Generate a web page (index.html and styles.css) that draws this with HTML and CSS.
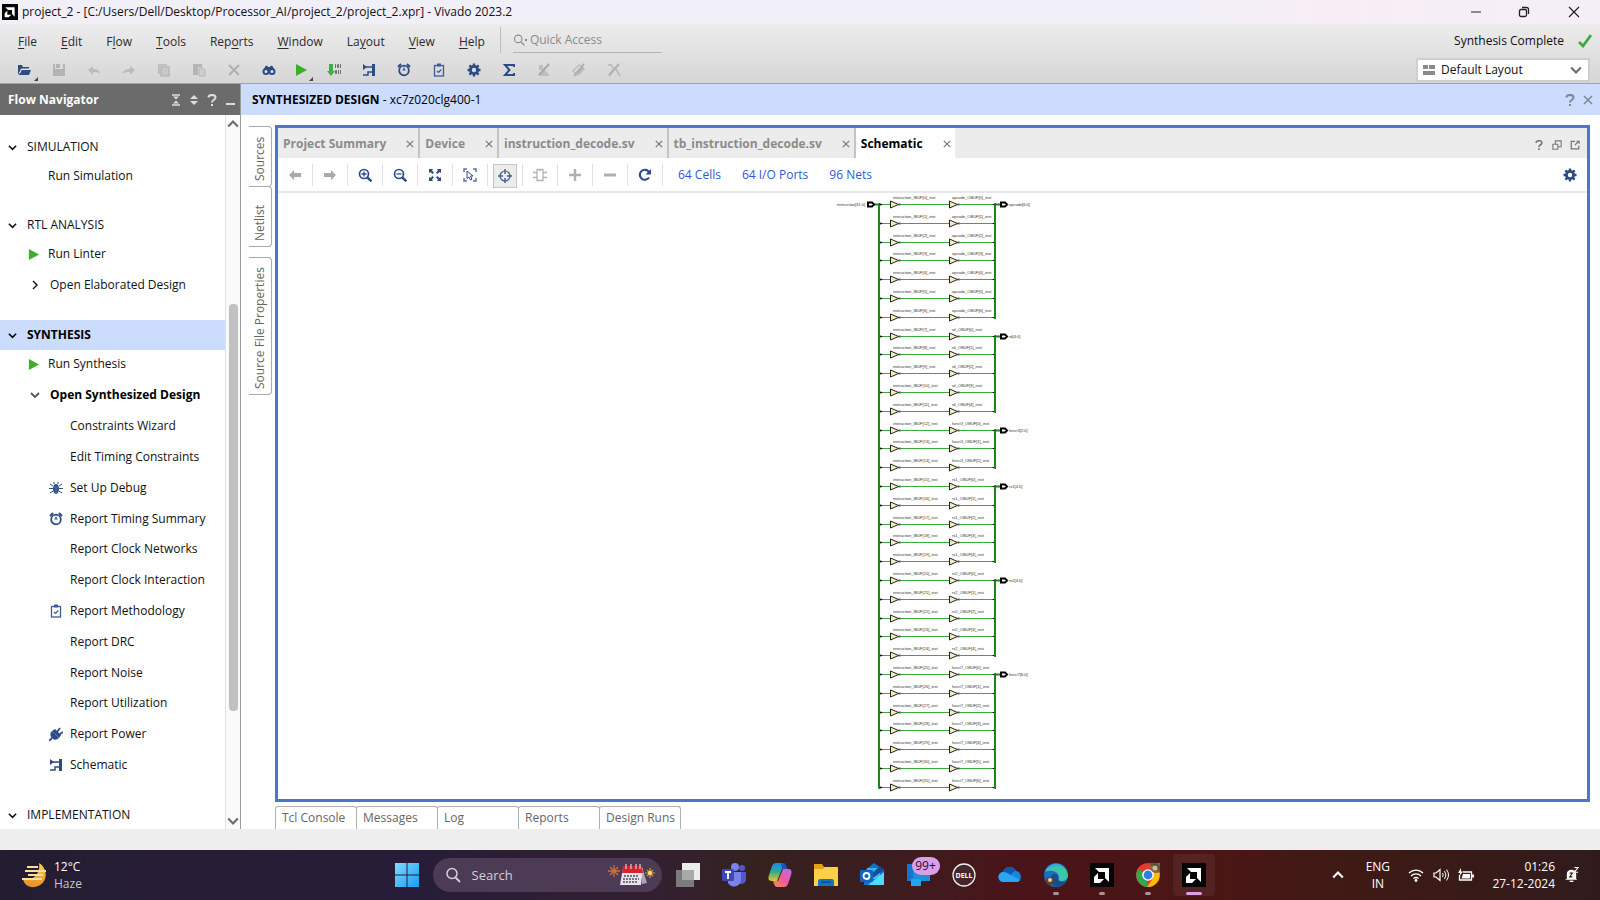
FILE: index.html
```html
<!DOCTYPE html>
<html lang="en">
<head>
<meta charset="utf-8">
<title>project_2 - Vivado 2023.2</title>
<link rel="stylesheet" href="styles.css">
</head>
<body>
<svg class="sprite" aria-hidden="true">
  <symbol id="i-amd" viewBox="0 0 24 24"><rect width="24" height="24" fill="#050505"/><path d="M5 5h14v14l-4-4V9H9z" fill="#fff"/><path d="M8 10v6h6l-4 4H4v-6z" fill="#fff"/></symbol>
  <symbol id="i-open" viewBox="0 0 14 14"><path d="M1 12V2h4l1 2h6v2H4z" fill="#2d4c86"/><path d="M4 7h10l-2 5H2z" fill="#2d4c86"/><path d="M3 10l1.500-4H12" fill="none" stroke="#e4e4e4"/></symbol>
  <symbol id="i-save" viewBox="0 0 14 14"><path d="M1 1h2v5h8V1h2v12H1z" fill="#b4b4b4"/><path d="M4 1h4v4H4z" fill="#b4b4b4"/></symbol>
  <symbol id="i-undo" viewBox="0 0 14 14"><path d="M1 7l5-4v3c4 0 7 1 7 5-2-2-4-2-7-2v3z" fill="#bcbcbc"/></symbol>
  <symbol id="i-redo" viewBox="0 0 14 14"><path d="M13 7L8 3v3c-4 0-7 1-7 5 2-2 4-2 7-2v3z" fill="#bcbcbc"/></symbol>
  <symbol id="i-copy" viewBox="0 0 14 14"><path d="M1 1h9v2H3v8H1z" fill="#c0c0c0"/><rect x="4" y="4" width="8" height="9" fill="#c8c8c8" stroke="#b8b8b8" stroke-width="1.500"/></symbol>
  <symbol id="i-paste" viewBox="0 0 14 14"><path d="M1 1h9v3H6v8H1z" fill="#b4b4b4"/><path d="M7 5h4l2 2v6H7z" fill="#cecece" stroke="#b4b4b4"/></symbol>
  <symbol id="i-del" viewBox="0 0 14 14"><path d="M2 2l10 10M12 2L2 12" stroke="#b0b0b0" stroke-width="2"/></symbol>
  <symbol id="i-find" viewBox="0 0 14 14"><path d="M3 4c1-2 3-1 3 0h2c0-1 2-2 3 0l2 4H1z" fill="#2d4c86"/><circle cx="4" cy="8.500" r="2.500" fill="#dde3ee" stroke="#2d4c86" stroke-width="2"/><circle cx="10" cy="8.500" r="2.500" fill="#dde3ee" stroke="#2d4c86" stroke-width="2"/></symbol>
  <symbol id="i-play" viewBox="0 0 14 14"><path d="M2 1l11 6-11 6z" fill="#3fae29"/></symbol>
  <symbol id="i-bits" viewBox="0 0 14 14"><path d="M2 1h4v7h2l-4 5-4-5h2z" fill="#43ad45"/><path d="M8.500 1v4M10.500 1.500h1v3h-1zM13.500 1v4M8.500 7.500h1v3h-1zM11.500 7v4M13.500 7v4" fill="none" stroke="#555" stroke-width=".8"/></symbol>
  <symbol id="i-sch" viewBox="0 0 14 14"><path d="M1 1l4 3-4 3z" fill="#2d4c86"/><path d="M4 4h6M1 12h5V9h4" stroke="#2d4c86" stroke-width="1.500" fill="none"/><path d="M10 1h3v12h-3z" fill="#2d4c86"/></symbol>
  <symbol id="i-clock" viewBox="0 0 14 14"><circle cx="7" cy="7.500" r="4.800" fill="none" stroke="#2d4c86" stroke-width="1.800"/><path d="M1 4l3-3M13 4l-3-3" stroke="#2d4c86" stroke-width="2"/><path d="M7 4.500v3M5.500 7h3" stroke="#2d4c86" stroke-width="1.200"/></symbol>
  <symbol id="i-clip" viewBox="0 0 14 14"><rect x="2.500" y="2.500" width="9" height="10.500" fill="none" stroke="#3f5b94" stroke-width="1.300"/><path d="M5 .5h4v3H5z" fill="#3f5b94"/><path d="M5 8l1.500 1.500L9.300 6.500" fill="none" stroke="#3f5b94" stroke-width="1.200"/></symbol>
  <symbol id="i-gear" viewBox="0 0 14 14"><circle cx="7" cy="7" r="3.600" fill="none" stroke="#2d4c86" stroke-width="2.800"/><path d="M7 .5V3M7 11v2.500M.5 7H3M11 7h2.500M2.400 2.400l1.800 1.800M9.800 9.800l1.800 1.800M2.400 11.600l1.800-1.800M9.800 4.200l1.800-1.800" stroke="#2d4c86" stroke-width="2.400"/></symbol>
  <symbol id="i-sum" viewBox="0 0 14 14"><path d="M12 4V2H3l4.500 5L3 12h9v-2" fill="none" stroke="#2d4c86" stroke-width="2"/></symbol>
  <symbol id="i-x1" viewBox="0 0 14 14"><path d="M2 2h4v3l7 8H2l3-6H2z" fill="#bebebe"/><path d="M2 12L12 1" stroke="#a8a8a8" stroke-width="2"/></symbol>
  <symbol id="i-x2" viewBox="0 0 14 14"><path d="M1 8l6-6 5 4-6 6z" fill="none" stroke="#bebebe" stroke-width="1.500"/><path d="M2 13L12 1M6 10l5-6" stroke="#b0b0b0" stroke-width="2"/></symbol>
  <symbol id="i-x3" viewBox="0 0 14 14"><path d="M1 2h3l3 4h2l4 7M2 13l4-5" fill="none" stroke="#bebebe" stroke-width="2"/><path d="M2 12L12 1" stroke="#b0b0b0" stroke-width="2"/></symbol>
  <symbol id="i-bug" viewBox="0 0 14 14"><ellipse cx="7" cy="8" rx="3" ry="5" fill="#2d4c86"/><path d="M1 3l3 2M13 3l-3 2M0 7.500h4M10 7.500h4M1 12l3-2M13 12l-3-2M5 3V1M9 3V1" stroke="#2d4c86" fill="none"/><path d="M7 5v7" stroke="#8fa0c4" stroke-width=".6"/></symbol>
  <symbol id="i-plug" viewBox="0 0 14 14"><path d="M3 4l7 7c-2 2-5 2-6 1l-2-2C1 8 1 6 3 4z" fill="#2d4c86"/><path d="M3 4l3-2 6 6-2 3z" fill="#2d4c86"/><path d="M8 5l3-4M10.500 7.500L14 5M3 11l-3 3" stroke="#2d4c86" stroke-width="1.800"/></symbol>
  <symbol id="i-down" viewBox="0 0 10 10"><path d="M1 3l4 4 4-4" fill="none" stroke="currentColor" stroke-width="1.800"/></symbol>
  <symbol id="i-right" viewBox="0 0 10 10"><path d="M3 1l4 4-4 4" fill="none" stroke="currentColor" stroke-width="1.400"/></symbol>
  <symbol id="i-up" viewBox="0 0 10 10"><path d="M1 7l4-4 4 4" fill="none" stroke="currentColor" stroke-width="1.800"/></symbol>
  <symbol id="i-close" viewBox="0 0 10 10"><path d="M1 1l8 8M9 1L1 9" stroke="currentColor" stroke-width="1.500"/></symbol>
  <symbol id="i-help" viewBox="0 0 10 12"><path d="M1.500 3.500C1.500 0 8.500 0 8.500 3.500 8.500 6 5 5.500 5 8.500M5 10v2" fill="none" stroke="currentColor" stroke-width="2"/></symbol>
  <symbol id="i-left-arrow" viewBox="0 0 14 14"><path d="M1 7l5-5v3h7v4H6v3z" fill="#a9a9a9"/></symbol>
  <symbol id="i-right-arrow" viewBox="0 0 14 14"><path d="M13 7L8 2v3H1v4h7v3z" fill="#a9a9a9"/></symbol>
  <symbol id="i-zin" viewBox="0 0 14 14"><circle cx="6" cy="6" r="4.500" fill="none" stroke="#2d4c86" stroke-width="1.700"/><path d="M6 3.500v5M3.500 6h5" stroke="#2d4c86" stroke-width="1.300"/><path d="M9.300 9.300l4 4" stroke="#2d4c86" stroke-width="2.400"/></symbol>
  <symbol id="i-zout" viewBox="0 0 14 14"><circle cx="6" cy="6" r="4.500" fill="none" stroke="#2d4c86" stroke-width="1.700"/><path d="M3.500 6h5" stroke="#2d4c86" stroke-width="1.300"/><path d="M9.300 9.300l4 4" stroke="#2d4c86" stroke-width="2.400"/></symbol>
  <symbol id="i-fit" viewBox="0 0 14 14"><path d="M1 1h4L4 2.500l2 2L4.500 6l-2-2L1 5zM13 1H9l1 1.500-2 2L9.500 6l2-2L13 5zM1 13h4l-1-1.500 2-2L4.500 8l-2 2L1 9zM13 13H9l1-1.500-2-2L9.500 8l2 2L13 9z" fill="#2d4c86"/></symbol>
  <symbol id="i-sel" viewBox="0 0 14 14"><path d="M1 4V1h3M10 1h3v3M13 10v3h-3M4 13H1v-3" fill="none" stroke="#5b73a3" stroke-width="1.500"/><path d="M4 3l6 5H7.500L9 11.500l-1.500.5L6 9l-2 1.500z" fill="#fff" stroke="#2d4c86"/></symbol>
  <symbol id="i-target" viewBox="0 0 14 14"><circle cx="7" cy="7" r="5" fill="none" stroke="#3f5b94" stroke-width="1.200"/><path d="M7 0v5M7 9v5M0 7h5M9 7h5" stroke="#3f5b94" stroke-width="1.400"/></symbol>
  <symbol id="i-chip" viewBox="0 0 14 14"><path d="M4 1.500h2l1 1 1-1h2v11H4z" fill="none" stroke="#b4b4b4" stroke-width="1.300"/><path d="M0 4.500h4M0 9.500h4M10 4.500h4M10 9.500h4" stroke="#b4b4b4" stroke-width="1.500"/></symbol>
  <symbol id="i-plus" viewBox="0 0 14 14"><path d="M7 1v12M1 7h12" stroke="#b0b0b0" stroke-width="2.400"/></symbol>
  <symbol id="i-minus" viewBox="0 0 14 14"><path d="M1 7h12" stroke="#b0b0b0" stroke-width="3"/></symbol>
  <symbol id="i-reload" viewBox="0 0 14 14"><path d="M11 9.500A5 5 0 1 1 11 4" fill="none" stroke="#2d4c86" stroke-width="2.200"/><path d="M13 1v5.500H7.500z" fill="#2d4c86"/></symbol>
  <symbol id="i-restore" viewBox="0 0 12 12"><path d="M1 5h6v6H1zM4 5V1h7v7H7" fill="none" stroke="currentColor" stroke-width="1.300"/></symbol>
  <symbol id="i-popout" viewBox="0 0 12 12"><path d="M6 1.500H1.500v9h9V7M6 6l4-4M8 1.500h3v3" fill="none" stroke="currentColor" stroke-width="1.500"/></symbol>
  <symbol id="i-search" viewBox="0 0 16 16"><circle cx="7" cy="6.500" r="5" fill="none" stroke="currentColor" stroke-width="1.500"/><path d="M10.500 10.500L15 15" stroke="currentColor" stroke-width="1.800"/></symbol>
</svg>

<header class="titlebar">
  <svg class="app-logo"><use href="#i-amd"/></svg>
  <h1>project_2 - [C:/Users/Dell/Desktop/Processor_AI/project_2/project_2.xpr] - Vivado 2023.2</h1>
  <div class="window-buttons">
    <button aria-label="Minimize"><svg viewBox="0 0 12 12"><path d="M1 6h10" stroke="#222"/></svg></button>
    <button aria-label="Restore"><svg viewBox="0 0 12 12"><rect x="1.500" y="3.500" width="7" height="7" rx="1.500" fill="none" stroke="#222" stroke-width="1.300"/><path d="M4 1.500h4.500a2 2 0 0 1 2 2V8" fill="none" stroke="#222" stroke-width="1.300"/></svg></button>
    <button aria-label="Close"><svg viewBox="0 0 12 12"><path d="M1 1l10 10M11 1L1 11" stroke="#222" stroke-width="1.200"/></svg></button>
  </div>
</header>

<div class="commands">
  <div class="commands-main">
    <div class="menu-row">
      <nav class="menu" aria-label="Main menu">
        <button><u>F</u>ile</button><button><u>E</u>dit</button><button>F<u>l</u>ow</button><button><u>T</u>ools</button><button>Rep<u>o</u>rts</button><button><u>W</u>indow</button><button>La<u>y</u>out</button><button><u>V</u>iew</button><button><u>H</u>elp</button>
      </nav>
      <label class="quick"><svg><use href="#i-search"/></svg><i class="dot"></i><input type="text" placeholder="Quick Access" aria-label="Quick Access"></label>
    </div>
    <div class="toolbar" role="toolbar" aria-label="Main toolbar">
      <button class="has-menu" aria-label="Open"><svg><use href="#i-open"/></svg></button>
      <button aria-label="Save"><svg><use href="#i-save"/></svg></button>
      <button aria-label="Undo"><svg><use href="#i-undo"/></svg></button>
      <button aria-label="Redo"><svg><use href="#i-redo"/></svg></button>
      <button aria-label="Copy"><svg><use href="#i-copy"/></svg></button>
      <button aria-label="Paste"><svg><use href="#i-paste"/></svg></button>
      <button aria-label="Delete"><svg><use href="#i-del"/></svg></button>
      <button aria-label="Find"><svg><use href="#i-find"/></svg></button>
      <button class="has-menu narrow" aria-label="Run"><svg><use href="#i-play"/></svg></button>
      <button aria-label="Generate Bitstream"><svg><use href="#i-bits"/></svg></button>
      <button aria-label="Schematic"><svg><use href="#i-sch"/></svg></button>
      <button aria-label="Timing"><svg><use href="#i-clock"/></svg></button>
      <button aria-label="Methodology"><svg><use href="#i-clip"/></svg></button>
      <button aria-label="Settings"><svg><use href="#i-gear"/></svg></button>
      <button aria-label="Summary"><svg><use href="#i-sum"/></svg></button>
      <button aria-label="Unhighlight"><svg><use href="#i-x1"/></svg></button>
      <button aria-label="Unmark"><svg><use href="#i-x2"/></svg></button>
      <button aria-label="Unselect"><svg><use href="#i-x3"/></svg></button>
    </div>
  </div>
  <div class="commands-side">
    <p class="status">Synthesis Complete <svg viewBox="0 0 14 14"><path d="M1 8l4 4 8-11" fill="none" stroke="#3fab45" stroke-width="2.800"/></svg></p>
    <label class="layout-select">
      <svg class="layout-icon" viewBox="0 0 12 10"><path d="M0 0h5v4H0zM6 0h6v4H6zM0 6h12v4H0z" fill="#8a8a8a"/></svg>
      <select aria-label="Layout"><option>Default Layout</option></select>
      <svg class="chev"><use href="#i-down"/></svg>
    </label>
  </div>
</div>

<div class="workspace">
  <aside class="flow">
    <div class="flow-head"><h2>Flow Navigator</h2>
      <button aria-label="Collapse all"><svg viewBox="0 0 10 12"><path d="M1 1h8M1 11h8" stroke="#ddd" stroke-width="1.500"/><path d="M5 5.500L2 2.500h6zM5 6.500l3 3H2z" fill="#ddd"/></svg></button>
      <button aria-label="Expand all"><svg viewBox="0 0 10 12"><path d="M5 1l4 4H1zM5 11L1 7h8z" fill="#ddd"/></svg></button>
      <button aria-label="Help"><svg viewBox="0 0 10 12"><use href="#i-help"/></svg></button>
      <button aria-label="Minimize"><svg viewBox="0 0 10 12"><path d="M1 10h9" stroke="#ddd" stroke-width="2"/></svg></button>
    </div>
    <div class="flow-body">
      <nav class="tree" aria-label="Flow steps">
        <section>
          <h3><svg><use href="#i-down"/></svg>SIMULATION</h3>
          <button class="run"><i></i>Run Simulation</button>
        </section>
        <section>
          <h3><svg><use href="#i-down"/></svg>RTL ANALYSIS</h3>
          <button class="run"><svg><use href="#i-play"/></svg>Run Linter</button>
          <button class="branch"><svg><use href="#i-right"/></svg>Open Elaborated Design</button>
        </section>
        <section>
          <h3 class="current"><svg><use href="#i-down"/></svg>SYNTHESIS</h3>
          <button class="run"><svg><use href="#i-play"/></svg>Run Synthesis</button>
          <button class="branch open"><svg><use href="#i-down"/></svg>Open Synthesized Design</button>
          <ul>
            <li><button><i></i>Constraints Wizard</button></li>
            <li><button><i></i>Edit Timing Constraints</button></li>
            <li><button><svg><use href="#i-bug"/></svg>Set Up Debug</button></li>
            <li><button><svg><use href="#i-clock"/></svg>Report Timing Summary</button></li>
            <li><button><i></i>Report Clock Networks</button></li>
            <li><button><i></i>Report Clock Interaction</button></li>
            <li><button><svg><use href="#i-clip"/></svg>Report Methodology</button></li>
            <li><button><i></i>Report DRC</button></li>
            <li><button><i></i>Report Noise</button></li>
            <li><button><i></i>Report Utilization</button></li>
            <li><button><svg><use href="#i-plug"/></svg>Report Power</button></li>
            <li><button><svg><use href="#i-sch"/></svg>Schematic</button></li>
          </ul>
        </section>
        <section>
          <h3><svg><use href="#i-down"/></svg>IMPLEMENTATION</h3>
        </section>
      </nav>
      <div class="scroll"><svg><use href="#i-up"/></svg><div class="track"><div class="thumb"></div></div><svg><use href="#i-down"/></svg></div>
    </div>
  </aside>

  <main class="design">
    <div class="design-head"><h2><b>SYNTHESIZED DESIGN</b> - xc7z020clg400-1</h2>
      <button aria-label="Help"><svg viewBox="0 0 10 12"><use href="#i-help"/></svg></button>
      <button aria-label="Close"><svg viewBox="0 0 10 10"><use href="#i-close"/></svg></button>
    </div>
    <div class="design-body">
      <div class="side-tabs"><button>Sources</button><button>Netlist</button><button class="apart">Source File Properties</button></div>
      <div class="center">
        <section class="panel">
          <div class="tabs">
            <div class="tab"><button>Project Summary</button><button class="x" aria-label="Close Project Summary"><svg><use href="#i-close"/></svg></button></div>
            <div class="tab"><button>Device</button><button class="x" aria-label="Close Device"><svg><use href="#i-close"/></svg></button></div>
            <div class="tab"><button>instruction_decode.sv</button><button class="x" aria-label="Close instruction_decode.sv"><svg><use href="#i-close"/></svg></button></div>
            <div class="tab"><button>tb_instruction_decode.sv</button><button class="x" aria-label="Close tb_instruction_decode.sv"><svg><use href="#i-close"/></svg></button></div>
            <div class="tab active"><button>Schematic</button><button class="x" aria-label="Close Schematic"><svg><use href="#i-close"/></svg></button></div>
            <div class="tab-tools">
              <button aria-label="Help"><svg viewBox="0 0 10 12"><use href="#i-help"/></svg></button>
              <button aria-label="Restore"><svg><use href="#i-restore"/></svg></button>
              <button aria-label="Float"><svg><use href="#i-popout"/></svg></button>
            </div>
          </div>
          <div class="sch-bar" role="toolbar" aria-label="Schematic toolbar">
            <span><button aria-label="Back"><svg><use href="#i-left-arrow"/></svg></button></span>
            <span><button aria-label="Forward"><svg><use href="#i-right-arrow"/></svg></button></span>
            <span><button aria-label="Zoom in"><svg><use href="#i-zin"/></svg></button></span>
            <span><button aria-label="Zoom out"><svg><use href="#i-zout"/></svg></button></span>
            <span><button aria-label="Zoom fit"><svg><use href="#i-fit"/></svg></button></span>
            <span><button aria-label="Zoom to selection"><svg><use href="#i-sel"/></svg></button></span>
            <span><button class="pressed" aria-label="Autofit selection" aria-pressed="true"><svg><use href="#i-target"/></svg></button></span>
            <span><button aria-label="Cell pins"><svg><use href="#i-chip"/></svg></button></span>
            <span><button aria-label="Add"><svg><use href="#i-plus"/></svg></button></span>
            <span><button aria-label="Remove"><svg><use href="#i-minus"/></svg></button></span>
            <span><button aria-label="Regenerate"><svg><use href="#i-reload"/></svg></button></span>
            <a href="#cells">64 Cells</a><a href="#ports">64 I/O Ports</a><a href="#nets">96 Nets</a>
            <button class="gear" aria-label="Settings"><svg><use href="#i-gear"/></svg></button>
          </div>
          <div class="canvas"><svg id="schematic" class="schematic" viewBox="0 0 200 604" role="img" aria-label="Schematic"></svg></div>
        </section>
        <div class="bottom-tabs"><button>Tcl Console</button><button>Messages</button><button>Log</button><button>Reports</button><button>Design Runs</button></div>
      </div>
    </div>
  </main>
</div>
<div class="statusbar"></div>

<footer class="taskbar">
  <div class="weather">
    <svg viewBox="0 0 26 26"><defs><linearGradient id="moon" x1="0" y1="0" x2="0" y2="1"><stop offset="0" stop-color="#f6d24a"/><stop offset="1" stop-color="#ee8a2b"/></linearGradient></defs><path d="M18 1c10 6 9 22-4 24C7 26 3 22 2 17c8 3 18-4 16-16z" fill="url(#moon)"/><path d="M6 5h11M4 9h21M7 13h15M1 17h20" stroke="#f8dfa0" stroke-width="2"/></svg>
    <p>12°C<br><span>Haze</span></p>
  </div>
  <div class="apps">
    <button aria-label="Start"><svg viewBox="0 0 24 24"><defs><linearGradient id="win" x1="0" y1="0" x2="1" y2="1"><stop offset="0" stop-color="#7fdcff"/><stop offset="1" stop-color="#169bf0"/></linearGradient></defs><path d="M0 0h11.500v11.500H0zM12.500 0H24v11.500H12.500zM0 12.500h11.500V24H0zM12.500 12.500H24V24H12.500z" fill="url(#win)"/></svg></button>
    <label class="task-search"><svg class="mag"><use href="#i-search"/></svg><input type="text" placeholder="Search" aria-label="Search">
      <svg class="cal" viewBox="0 0 48 24"><path d="M7 2v12M1 8h12M3 4l8 8M11 4l-8 8" stroke="#c5713e" stroke-width="1.300"/><path d="M43 5v10M38 10h10M40 7l6 6M46 7l-6 6" stroke="#d59a3c" stroke-width="1.200"/><circle cx="43" cy="10" r="2" fill="#ffdf6b"/><path d="M35 4l5 16-5 1z" fill="#a9a4b8"/><path d="M16 5h20l-2 17H13z" fill="#e6e3ea"/><path d="M16 3h19l1 7H15z" fill="#d2262c"/><path d="M19 1v5M24 1v5M29 1v5M33 1v5" stroke="#eee"/><path d="M17 13h15M16 16h16M16 19h15" stroke="#77717f" stroke-width="2" stroke-dasharray="2 1"/></svg></label>
    <button aria-label="Task view"><svg viewBox="0 0 24 24"><path d="M6 0h18v17H6z" fill="#ececec"/><path d="M0 7h18v17H0z" fill="#7b7b7b"/><path d="M6 7h12v10H6z" fill="#a9a9a9"/></svg></button>
    <button aria-label="Teams"><svg viewBox="0 0 24 24"><circle cx="13" cy="4" r="4" fill="#7b83eb"/><circle cx="20" cy="5" r="3" fill="#5059c9"/><path d="M15 9h9v7a5 5 0 0 1-9 3z" fill="#5059c9"/><path d="M6 9h13v8a7 7 0 0 1-13 3z" fill="#7b83eb"/><rect y="6" width="12" height="12" rx="1" fill="#4048b5"/><path d="M3 9h6M6 9v7" stroke="#fff" stroke-width="1.800"/></svg></button>
    <button aria-label="Copilot"><svg viewBox="0 0 24 24"><defs><linearGradient id="cpa" x1="0" y1="0" x2="0" y2="1"><stop offset="0" stop-color="#1c86ee"/><stop offset=".5" stop-color="#2fae8a"/><stop offset="1" stop-color="#e9c52b"/></linearGradient><linearGradient id="cpb" x1="0" y1="1" x2="1" y2="0"><stop offset="0" stop-color="#ff8b4a"/><stop offset=".5" stop-color="#ee5a9b"/><stop offset="1" stop-color="#b56cf0"/></linearGradient></defs><path d="M8 0h7c2 0 3 3 4 6h-5L9 18H4c-4 0-4-3-3-6L4 3c1-2 2-3 4-3z" fill="url(#cpa)"/><path d="M16 24H9c-2 0-3-3-4-6h5l5-12h5c4 0 4 3 3 6l-3 9c-1 2-2 3-4 3z" fill="url(#cpb)"/><path d="M13 0h2c2 0 3 3 4 6h-5z" fill="#1454c9"/></svg></button>
    <button aria-label="File Explorer"><svg viewBox="0 0 24 24"><path d="M0 1h8l2 3h14v19H0z" fill="#e5a214"/><path d="M0 6h9l2-2h13v19H0z" fill="#fccf48"/><path d="M4 23v-5c0-1 1-2 2-2h12c1 0 2 1 2 2v5z" fill="#1475bd"/><path d="M7 19h10" stroke="#0b4d85" stroke-width="1.500"/></svg></button>
    <button aria-label="Outlook"><svg viewBox="0 0 24 24"><path d="M4 8l10-8 10 7v15H4z" fill="#1273c4"/><path d="M7 5h13v11H7z" fill="#35b5f0"/><path d="M24 9v13H8z" fill="#50d9ff"/><path d="M24 7L11 16l-3-2L20 3z" fill="#154a96"/><rect y="7" width="13" height="12" rx="1" fill="#0f65c0"/><circle cx="6.500" cy="13" r="3" fill="none" stroke="#fff" stroke-width="1.800"/></svg></button>
    <button class="badged" aria-label="Widgets"><svg viewBox="0 0 24 24"><path d="M1 1h12v17H1z" fill="#1474cf"/><path d="M7 4h17v14H7z" fill="#1c90df"/><path d="M5 16h10v7H5z" fill="#25a2ec"/></svg><span class="badge">99+</span></button>
    <button aria-label="Dell"><svg viewBox="0 0 24 24"><circle cx="12" cy="12" r="11" fill="#45262a" stroke="#eee" stroke-width="1.300"/><text class="dell" x="12" y="15" text-anchor="middle">DELL</text></svg></button>
    <button aria-label="OneDrive"><svg viewBox="0 0 24 24"><path d="M6 19a5 5 0 0 1-1-10 7 7 0 0 1 13-1 6 6 0 0 1 2 11z" fill="#1686df"/><path d="M6 19a5 5 0 0 1-1-10c3-1 5 1 8 3l9 5c-1 1-2 2-4 2z" fill="#2ba6f3"/><path d="M5 9a7 7 0 0 1 13-1c-3 0-4 2-5 4-3-2-5-3-8-3z" fill="#0c5bb0"/></svg></button>
    <button class="running" aria-label="Edge"><svg viewBox="0 0 24 24"><circle cx="12" cy="12" r="12" fill="#1a6fc4"/><path d="M1 9A12 12 0 0 1 24 12c0 4-3 6-6 6-4 0-3-2-3-4 0-5-8-8-14-5z" fill="#3cc6a8"/><path d="M2 7c3-7 14-9 19-2-6-4-13-2-19 2z" fill="#37a8ea"/><path d="M8 12c3-3 7 0 6 4-1 2 3 4 8 2-3 5-9 7-13 4-4-3-4-7-1-10z" fill="#174b8a"/><circle cx="6" cy="18" r="4" fill="#5e4330"/><circle cx="6" cy="17" r="2" fill="#e1cdb4"/></svg></button>
    <button class="running" aria-label="Vivado launcher"><svg><use href="#i-amd"/></svg></button>
    <button class="running" aria-label="Chrome"><svg viewBox="0 0 24 24"><circle cx="12" cy="12" r="12" fill="#e33b2e"/><path d="M12 12L2 6a12 12 0 0 0 9 18z" fill="#2da94f"/><path d="M12 12l5 3-6 9A12 12 0 0 0 23 8H12z" fill="#fdbd00"/><circle cx="12" cy="12" r="5.800" fill="#fff"/><circle cx="12" cy="12" r="4.400" fill="#2f7de8"/><circle cx="20" cy="4" r="6" fill="#8b6248"/><circle cx="19" cy="5" r="2.500" fill="#d8b59a"/><path d="M14 2l5-3 6 5-2 5-2-6z" fill="#4f5a3c"/></svg></button>
    <button class="running current-app" aria-label="Vivado"><svg><use href="#i-amd"/></svg></button>
  </div>
  <div class="tray">
    <button aria-label="Hidden icons"><svg class="tray-up"><use href="#i-up"/></svg></button>
    <button class="lang">ENG<br>IN</button>
    <button class="net" aria-label="Network, volume, battery">
      <svg viewBox="0 0 16 14"><path d="M1 5a10 10 0 0 1 14 0M3 8a7 7 0 0 1 10 0M5.500 10.500a4 4 0 0 1 5 0" fill="none" stroke="#fff" stroke-width="1.300"/><circle cx="8" cy="12.500" r="1.400" fill="#fff"/></svg>
      <svg viewBox="0 0 16 14"><path d="M1 5h2l4-3.500v11L3 9H1z" fill="none" stroke="#fff" stroke-width="1.200"/><path d="M9.500 5q1.500 2 0 4M11.500 3q3 4 0 8M13.500 1.500q4 5.500 0 11" fill="none" stroke="#fff"/></svg>
      <svg viewBox="0 0 16 14"><path d="M5 4h8.500v8h-12V7" fill="none" stroke="#fff" stroke-width="1.300"/><path d="M5 6h7v4.500H3.500z" fill="#fff"/><path d="M14 6.500h2v3h-2z" fill="#fff"/><path d="M3 0L0 5h2L1.500 8 5 3.500H3z" fill="#fff"/></svg>
    </button>
    <button class="clock">01:26<br>27-12-2024</button>
    <button aria-label="Notifications"><svg class="bell" viewBox="0 0 16 18"><path d="M3 13V8c0-6 10-6 10 0v5l1 1H1z" fill="#fff"/><path d="M6 15h4v1.500H6z" fill="#fff"/><path d="M6 7h3l-3 4h3" fill="none" stroke="#301b1c" stroke-width="1.200"/><path d="M11 1h4l-4 5h4" fill="none" stroke="#fff" stroke-width="1.200"/></svg></button>
  </div>
</footer>
<script src="schematic.js"></script>
</body>
</html>
```
FILE: styles.css
```css
* { box-sizing: border-box; }
html, body { height: 100%; }
body { margin: 0; display: flex; flex-direction: column; font-family: "Open Sans", "Noto Sans", sans-serif; font-size: 12px; line-height: 18px; color: #111; background: #fff; overflow: hidden; }
h1, h2, h3, p, ul { margin: 0; padding: 0; font: inherit; }
ul { list-style: none; }
button, input, select { font: inherit; color: inherit; background: none; border: 0; padding: 0; margin: 0; outline: 0; white-space: nowrap; }
button svg { display: block; }
.sprite { position: absolute; width: 0; height: 0; }

.titlebar { display: flex; align-items: center; height: 24px; padding-left: 2px; background: linear-gradient(90deg, #f1eff7 0 75%, #f8edf5 83%, #f3eff6); }
.app-logo { width: 16px; height: 16px; margin-right: 4px; }
.titlebar h1 { flex: 1; }
.window-buttons { display: flex; }
.window-buttons button { width: 48px; height: 24px; display: grid; place-items: center; }
.window-buttons button:last-child { width: 52px; }
.window-buttons svg { width: 12px; height: 12px; }

.commands { display: flex; justify-content: space-between; height: 60px; background: linear-gradient(#ececec, #d6d6d6); border-bottom: 1px solid #a4a4a4; }
.menu-row { display: flex; height: 33px; }
.menu { display: flex; align-items: center; padding: 3px 3px 0 6px; }
.menu button { padding: 0 12px; color: #2a2a2a; }
.menu u { text-underline-offset: 2px; }
.quick { display: flex; align-items: center; margin-top: 3px; padding-left: 12px; height: 26px; border-left: 1px solid #bdbdbd; color: #8b8b8b; background: linear-gradient(#b4b4b4, #b4b4b4) 12px 25px / 149px 1px no-repeat; }
.quick svg { width: 12px; height: 12px; }
.dot { width: 2px; height: 2px; margin: 0 3px 0 0; background: #888; }
.quick input { width: 132px; }
.quick svg, .quick .dot, .quick input { flex: none; }
input::placeholder { color: inherit; opacity: 1; }
.toolbar { display: flex; align-items: center; height: 26px; padding-left: 6px; }
.toolbar button { position: relative; width: 35px; height: 26px; display: grid; place-items: center; }
.toolbar .narrow { width: 30px; }
.toolbar svg { width: 14px; height: 14px; }
.has-menu::after { content: ""; position: absolute; right: 3px; bottom: 2px; border: 2px solid transparent; border-right-color: #444; border-bottom-color: #444; }
.commands-side { display: flex; flex-direction: column; align-items: flex-end; padding: 8px 10px 0 0; }
.status { display: flex; align-items: center; gap: 14px; margin-right: -2px; }
.status svg { width: 14px; height: 14px; }
.layout-select { display: flex; align-items: center; width: 174px; height: 24px; margin-top: 8px; padding: 0 6px 0 5px; background: #fff; border: 2px solid #cfcfcf; }
.layout-icon { width: 12px; height: 10px; margin-right: 6px; }
.layout-select select { flex: 1; appearance: none; }
.chev { width: 12px; height: 12px; color: #6d6d6d; }

.workspace { display: flex; flex: 1; min-height: 0; }
.flow { display: flex; flex-direction: column; width: 241px; border-right: 1px solid #9c9c9c; }
.flow-head { display: flex; align-items: center; gap: 8px; height: 31px; padding: 0 5px 0 8px; background: #6b6b6b; color: #fff; }
.flow-head h2 { flex: 1; font-weight: 700; }
.flow-head button { color: #ddd; }
.flow-head svg { width: 10px; height: 12px; }
.flow-body { display: flex; flex: 1; min-height: 0; }
.tree { flex: 1; overflow: hidden; padding-top: 17px; }
.tree section { margin-bottom: 20px; }
.tree h3 { display: flex; align-items: center; height: 30px; padding-left: 8px; }
.tree h3 svg { width: 9px; height: 9px; margin-right: 10px; }
.tree h3.current { background: #cbdcfd; color: #000; font-weight: 700; }
.tree button { display: flex; align-items: center; width: 100%; }
.tree .run { height: 28px; padding-left: 27px; }
.tree .run svg, .tree .run i { width: 13px; height: 13px; margin-right: 8px; }
.tree .branch { height: 31px; padding-left: 30px; margin-top: 1px; }
.tree .branch svg { width: 10px; height: 10px; margin-right: 10px; }
.tree .open { font-weight: 700; color: #000; }
.tree .open svg { color: #555; }
.tree li button { height: 31px; padding-left: 49px; }
.tree li:nth-child(5n) button { height: 30px; }
.tree li svg, .tree li i { width: 14px; height: 14px; margin-right: 7px; }
.scroll { display: flex; flex-direction: column; align-items: center; width: 15px; padding: 3px 0 2px; border-left: 1px solid #e2e2e2; background: #fafafa; color: #6c6c6c; }
.scroll > svg { width: 12px; height: 12px; flex: none; }
.track { flex: 1; width: 9px; display: grid; grid-template-rows: 174fr 408fr 104fr; }
.thumb { grid-row: 2; border-radius: 4px; background: #c1c1c1; }

.design { display: flex; flex-direction: column; flex: 1; min-width: 0; }
.design-head { display: flex; align-items: center; gap: 8px; height: 31px; padding: 0 7px 0 11px; background: #cbdcfd; color: #000; }
.design-head h2 { flex: 1; }
.design-head button { color: #7f8796; }
.design-head svg { width: 10px; height: 12px; }
.design-body { display: flex; flex: 1; min-height: 0; padding-top: 10px; }
.side-tabs { width: 24px; margin: 1px 2px 0 8px; display: flex; flex-direction: column; }
.side-tabs button { writing-mode: vertical-rl; transform: rotate(180deg); width: 23px; height: 61px; margin-bottom: -1px; padding-top: 5px; border: 1px solid #aaa; border-right: 0; border-radius: 4px 0 0 4px; color: #666; text-align: left; }
.side-tabs .apart { height: 138px; margin-top: 11px; }
.center { display: flex; flex-direction: column; flex: 1; min-width: 0; }
.panel { display: flex; flex-direction: column; flex: 1; min-height: 0; margin-right: 10px; border: 3px solid #4a78c4; }
.tabs { display: flex; height: 30px; background: #ececec; color: #8b8b8b; font-weight: 700; }
.tab { display: flex; align-items: center; gap: 20px; padding: 2px 4px 0 5px; border-right: 2px solid #c4c4c4; }
.tab svg { width: 8px; height: 8px; }
.tab.active { background: #fff; color: #000; border: 0; }
.tab .x { color: #777; }
.tab-tools { display: flex; align-items: center; gap: 8px; margin-left: auto; padding: 4px 7px 0 0; color: #777; }
.tab-tools svg { width: 10px; height: 10px; }
.sch-bar { display: flex; align-items: center; height: 35px; border-bottom: 2px solid #e8e8e8; }
.sch-bar span { display: grid; place-items: center; width: 35px; height: 22px; border-right: 1px solid #e2e2e2; }
.sch-bar button svg { width: 14px; height: 14px; }
.sch-bar .pressed { padding: 4px; border: 1px solid #c6c6c6; background: #ececec; }
.sch-bar a { margin-left: 15px; margin-right: 6px; color: #2a5bd7; text-decoration: none; }
.sch-bar .gear { margin-left: auto; padding-right: 10px; }
.canvas { display: flex; justify-content: center; flex: 1; min-height: 0; }
.schematic { height: 100%; width: 200px; }
.wire { stroke: #3aaa3a; }
.bus { stroke: #1c861c; stroke-width: 2; }
.cell { fill: #f5ecc0; stroke: #222; stroke-width: 1; }
.tip { fill: #555; }
.pin { fill: #111; }
.port { fill: #fff; stroke: #000; stroke-width: 2; }
.net-label { font: 4px "Liberation Sans", sans-serif; fill: #333; }
.bottom-tabs { display: flex; height: 27px; padding-top: 4px; }
.bottom-tabs button { width: 82px; margin-right: -1px; padding-left: 6px; text-align: left; color: #666; border: 1px solid #b0b0b0; border-bottom: 0; border-radius: 3px 3px 0 0; }
.statusbar { height: 21px; background: #eee; }

.taskbar { display: grid; grid-template-columns: 1fr auto 1fr; align-items: center; height: 50px; color: #fff; background: linear-gradient(90deg, #241d31, #281d38 27%, #33202f 42%, #35221f 47%, #3c1d20 55%, #4a1419 64%, #4a1614 76%, #3f1a14 84%, #301b1c); }
.weather { display: flex; align-items: center; gap: 7px; padding-left: 21px; line-height: 17px; }
.weather svg { width: 26px; height: 26px; }
.weather span { color: #c9c6ce; }
.apps { display: flex; align-items: center; }
.apps button { position: relative; display: grid; place-items: center; width: 46px; height: 50px; }
.apps svg { width: 24px; height: 24px; }
.task-search { display: flex; align-items: center; width: 229px; height: 34px; margin: 0 3px; padding: 0 7px 0 12px; border-radius: 17px; background: #4d3a55; color: #d5cfd8; }
.task-search .mag { width: 16px; height: 16px; margin-right: 11px; }
.task-search input { flex: 1; min-width: 0; font-size: 13px; }
.task-search .cal { width: 48px; }
.badge { position: absolute; left: 17px; top: 7px; width: 28px; height: 18px; border-radius: 9px; background: #d9a0e8; color: #2a1030; text-align: center; }
.dell { font: 700 7px "Open Sans", sans-serif; fill: #fff; }
.running::after { content: ""; position: absolute; bottom: 5px; width: 6px; height: 3px; border-radius: 2px; background: #a89598; }
.current-app::before { content: ""; position: absolute; inset: 4px 2px; border-radius: 4px; background: rgba(255,255,255,.06); }
.current-app svg { position: relative; }
.current-app::after { width: 16px; background: #d9a0e8; }
.tray { display: flex; align-items: center; justify-content: flex-end; padding-right: 21px; line-height: 17px; }
.tray-up { width: 12px; height: 12px; }
.lang { width: 31px; margin: 0 15px 0 18px; text-align: center; }
.net { display: flex; gap: 9px; margin-right: 18px; }
.net svg { width: 16px; height: 14px; }
.clock { text-align: right; margin-right: 9px; }
.bell { width: 15px; height: 18px; }
```
FILE: schematic.js
```js
const groups = [["opcode", 7], ["rd", 5], ["funct3", 3], ["rs1", 5], ["rs2", 5], ["funct7", 7]];
const firstRow = 11;
const pitch = 18.8;
const rowY = i => Math.round(firstRow + i * pitch) - 0.5;
const label = (x, y, text, anchor = "start") =>
  `<text class="net-label" x="${x}" y="${y}" text-anchor="${anchor}">${text}</text>`;
const buffer = (x, y) =>
  `<path class="cell" d="M${x} ${y - 3.5}l8 3.5-8 3.5z"/><path class="tip" d="M${x + 8} ${y - 1}h2v2h-2z"/>`;
const port = (x, y) => `<path class="port" d="M${x} ${y - 2}h4l2 2-2 2h-4z"/>`;

let out = "";
let bit = 0;
for (const [name, width] of groups) {
  const first = rowY(bit);
  for (let i = 0; i < width; i++, bit++) {
    const y = rowY(bit);
    out += `<path class="wire" d="M46 ${y}H162"/>`;
    out += buffer(57.5, y) + buffer(116.5, y);
    out += `<path class="pin" d="M46 ${y - 1.5}l4 1.5-4 1.5zM163 ${y - 1.5}l-4 1.5 4 1.5z"/>`;
    out += label(60, y - 6, `instruction_IBUF[${bit}]_inst`);
    out += label(119, y - 6, `${name}_OBUF[${i}]_inst`);
  }
  out += `<path class="bus" d="M162 ${first}V${rowY(bit - 1) + 1}M162 ${first}h6"/>`;
  out += port(168, first) + label(176, first + 1.5, `${name}[${width - 1}:0]`);
}
out += `<path class="bus" d="M46 ${rowY(0)}V${rowY(31) + 1}M41 ${rowY(0)}h5"/>`;
out += port(35, rowY(0)) + label(32, rowY(0) + 1.5, "instruction[31:0]", "end");
document.getElementById("schematic").innerHTML = out;
```
